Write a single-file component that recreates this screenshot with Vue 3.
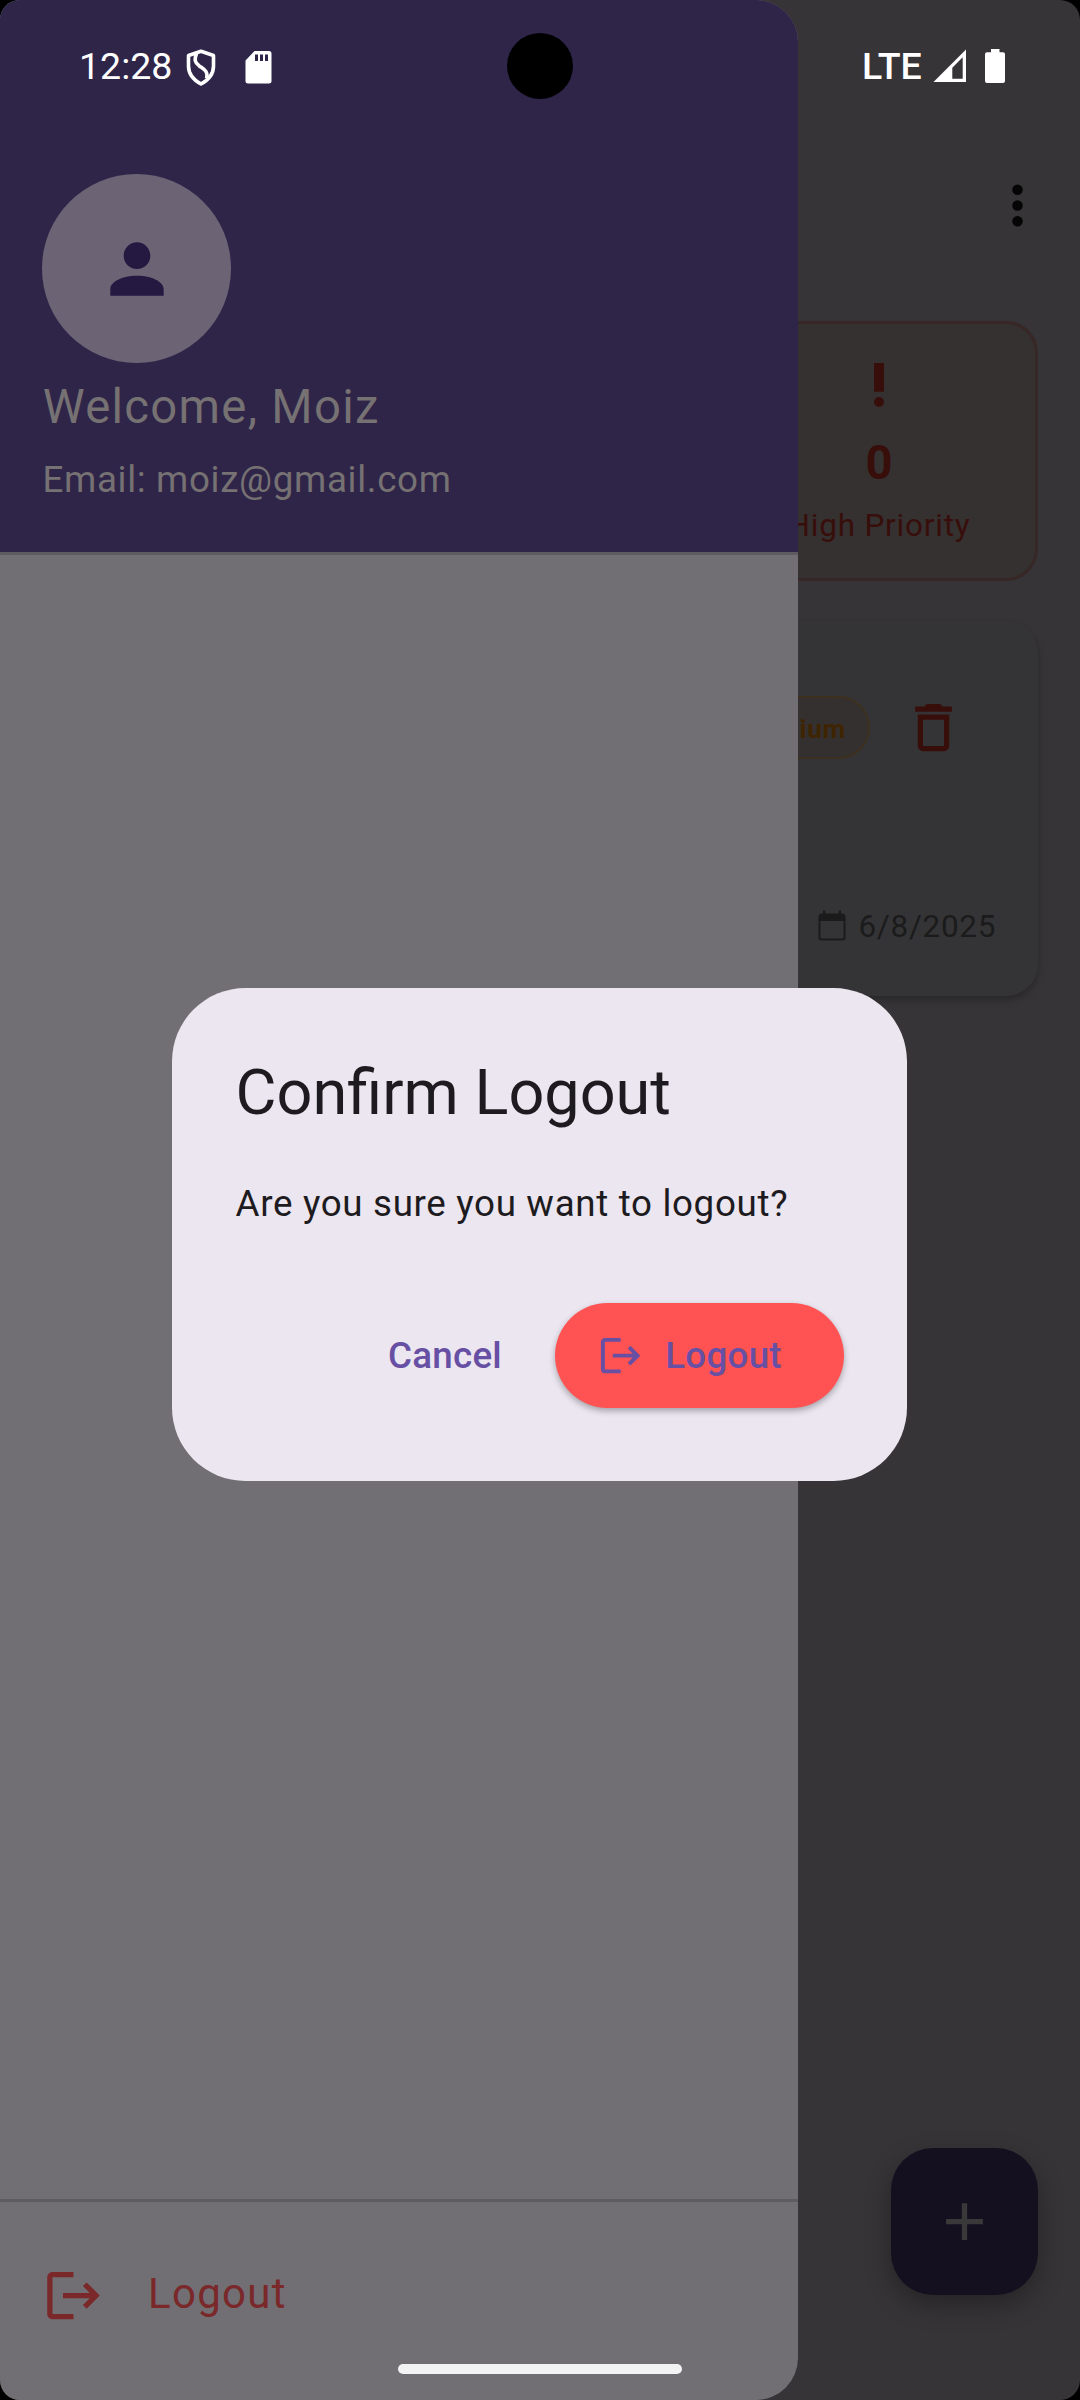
<script setup>
const logoutPath =
  'M17 7l-1.41 1.41L18.17 11H8v2h10.17l-2.58 2.58L17 17l5-5zM4 5h8V3H4c-1.1 0-2 .9-2 2v14c0 1.1.9 2 2 2h8v-2H4z'
const user = { name: 'Moiz', email: 'moiz@gmail.com' }
</script>

<template>
  <div class="device">
    <div class="screen">
      <main class="home layer">
        <header class="appbar">
          <svg class="kebab" width="63" height="63" viewBox="0 0 24 24">
            <circle cx="12" cy="6" r="2" /><circle cx="12" cy="12" r="2" /><circle cx="12" cy="18" r="2" />
          </svg>
        </header>
        <section class="stat">
          <svg class="bang" width="12" height="46" viewBox="0 0 12 46">
            <path d="M1 1h10v28.7H1z" /><circle cx="6" cy="40" r="5" />
          </svg>
          <strong class="count">0</strong>
          <span class="stat-label">High Priority</span>
        </section>
        <section class="task">
          <div class="task-top">
            <span class="badge">Medium</span>
            <svg class="trash" width="63" height="63" viewBox="0 0 24 24">
              <path d="M6 19a2 2 0 0 0 2 2h8a2 2 0 0 0 2-2V7H6zM8 9h8v10H8zM15.5 4l-.6-.7q-.3-.3-.8-.3H9.900q-.5 0-.8.3L8.500 4H5v2h14V4z" />
            </svg>
          </div>
          <div class="task-date">
            <svg width="36" height="36" viewBox="0 0 24 24">
              <path d="M19.700 19.700H4.300V8h15.400M16.500 1v2h-9V1H6v2H5c-1.110 0-2 .89-2 2v14a2 2 0 0 0 2 2h14a2 2 0 0 0 2-2V5c0-1.110-.9-2-2-2h-1V1" />
            </svg>
            <span>6/8/2025</span>
          </div>
        </section>
        <button class="fab">
          <svg width="63" height="63" viewBox="0 0 24 24"><path d="M19 13h-6v6h-2v-6H5v-2h6V5h2v6h6z" /></svg>
        </button>
      </main>

      <aside class="drawer layer">
        <header class="profile">
          <div class="avatar">
            <svg width="80" height="80" viewBox="0 0 24 24">
              <path d="M12 12c2.210 0 4-1.790 4-4s-1.790-4-4-4-4 1.790-4 4 1.790 4 4 4m0 2c-4.420 0-8 1.790-8 4v2h16v-2c0-2.210-3.580-4-8-4" />
            </svg>
          </div>
          <div class="welcome">Welcome, {{ user.name }}</div>
          <div class="email">Email: {{ user.email }}</div>
        </header>
        <footer class="drawer-logout">
          <svg width="63" height="63" viewBox="0 0 24 24"><path :d="logoutPath" /></svg>
          <span>Logout</span>
        </footer>
      </aside>

      <section class="dialog layer">
        <h1>Confirm Logout</h1>
        <p>Are you sure you want to logout?</p>
        <div class="actions">
          <button class="cancel">Cancel</button>
          <button class="confirm">
            <svg width="47.25" height="47.25" viewBox="0 0 24 24"><path :d="logoutPath" /></svg>
            <span>Logout</span>
          </button>
        </div>
      </section>

      <div class="status layer">
        <span class="clock">12:28</span>
        <svg class="shield" width="32" height="37" viewBox="0 0 32 37" fill="none" stroke="#fff" stroke-width="3.600" stroke-linejoin="round">
          <path d="M16 2.300 28.500 6.500v10.500c0 8-5 14-12.500 18C8.500 31 3.500 25 3.500 17V6.500z" />
          <path d="M11.500 4.500c-2.500 6.500-1.500 9 2.500 12.200 5 3.800 9.500 5.300 7.500 12.800" />
        </svg>
        <svg class="sd" width="27" height="33" viewBox="0 0 27 33" fill="#fff">
          <path fill-rule="evenodd" d="M9.500 0H24q2.500 0 2.500 2.500v28q0 2-2.500 2H3q-2.500 0-2.500-2v-21zM10 3.500v6.500h3V3.500zm5 0v6.500h3V3.500zm5 0v6.500h3V3.500z" />
        </svg>
        <span class="camera"></span>
        <span class="lte">LTE</span>
        <svg class="signal" width="34" height="34" viewBox="0 0 34 34" fill="#fff">
          <path fill-rule="evenodd" d="M33 .5V33H.5zM29.700 8.300 19.300 18.700v11h10.400z" />
        </svg>
        <svg class="battery" width="20" height="34" viewBox="0 0 20 34" fill="#fff">
          <path d="M6 0h8.500v3.300H18q2 0 2 2V32q0 2-2 2H2q-2 0-2-2V5.300q0-2 2-2h4z" />
        </svg>
      </div>

      <div class="home-bar layer"></div>
    </div>
  </div>
</template>

<style>
body {
  background: #000;
}
</style>

<style scoped>
* {
  box-sizing: border-box;
}
.device {
  width: 1080px;
  height: 2400px;
  background: #000;
  font-family: Roboto, "Liberation Sans", sans-serif;
}
.screen {
  display: grid;
  width: 1080px;
  height: 2400px;
  border-radius: 20px;
  overflow: hidden;
  background: #363436;
}
.layer {
  grid-area: 1 / 1;
}
svg {
  display: block;
  flex: none;
}
button {
  border: 0;
  padding: 0;
  font-family: inherit;
}

/* Dimmed task list behind the drawer */
.home {
  display: flex;
  flex-direction: column;
  align-items: flex-end;
  height: 2400px;
  padding: 174px 42px 105px;
}
.appbar {
  height: 147px;
  margin-right: -10.5px;
}
.kebab {
  fill: #050505;
}
.stat {
  display: flex;
  flex-direction: column;
  align-items: center;
  width: 318px;
  height: 260px;
  padding-top: 37.5px;
  border: 3px solid #372726;
  border-radius: 32px;
  background: #353131;
  color: #380e0b;
}
.bang {
  fill: #380e0b;
}
.count {
  margin-top: 27px;
  font-size: 47.25px;
  line-height: 56px;
  font-weight: 700;
}
.stat-label {
  margin-top: 15px;
  font-size: 31.5px;
  line-height: 40px;
  letter-spacing: 0.8px;
  white-space: nowrap;
}
.task {
  display: flex;
  flex-direction: column;
  justify-content: space-between;
  align-items: flex-end;
  width: 996px;
  height: 375px;
  margin-top: 40px;
  padding: 75px 42px 49px 42px;
  border-radius: 32px;
  background: #343436;
  box-shadow: 0 4px 7px rgba(0, 0, 0, 0.25);
}
.task-top {
  display: flex;
  gap: 32px;
  margin-right: 31px;
}
.badge {
  height: 63px;
  padding: 0 22px;
  border: 2px solid #3d301f;
  border-radius: 32px;
  background: #353030;
  color: #3f2400;
  font-size: 26.25px;
  font-weight: 700;
  line-height: 62px;
  letter-spacing: 0.7px;
}
.trash {
  fill: #380e0b;
}
.task-date {
  display: flex;
  align-items: center;
  gap: 9px;
  font-size: 31.5px;
  line-height: 40px;
  letter-spacing: 0.66px;
  color: #1b1b1b;
}
.task-date svg {
  fill: #1b1b1b;
}
.fab {
  display: flex;
  align-items: center;
  justify-content: center;
  width: 147px;
  height: 147px;
  margin-top: auto;
  border-radius: 42px;
  background: #15101f;
  box-shadow: 0 10px 26px rgba(0, 0, 0, 0.3);
}
.fab svg {
  fill: #3a3939;
}

/* Navigation drawer */
.drawer {
  display: flex;
  flex-direction: column;
  justify-content: space-between;
  width: 798px;
  height: 2400px;
  border-radius: 0 42px 42px 0;
  overflow: hidden;
  background: #716f74;
}
.profile {
  height: 555px;
  padding: 174px 42px 0;
  border-bottom: 3px solid #5e5c61;
  background: #2f2549;
  color: #767172;
}
.avatar {
  display: flex;
  align-items: center;
  justify-content: center;
  width: 189px;
  height: 189px;
  border-radius: 50%;
  background: #6c6475;
}
.avatar svg {
  fill: #251942;
}
.welcome {
  margin: 8px 0 0 0.7px;
  font-size: 47.25px;
  line-height: 72px;
  letter-spacing: 1.3px;
}
.email {
  margin: 13px 0 0 0.5px;
  font-size: 36.75px;
  line-height: 48px;
  letter-spacing: 0.66px;
}
.drawer-logout {
  display: flex;
  gap: 43px;
  height: 201px;
  padding: 62px 42px 0;
  border-top: 3px solid #5e5c61;
  color: #7a2829;
  font-size: 42px;
  line-height: 60px;
  letter-spacing: 1.3px;
}
.drawer-logout svg {
  fill: #7a2829;
}

/* Confirmation dialog */
.dialog {
  width: 735px;
  height: 492.5px;
  margin: 988px 0 0 172px;
  padding: 63px 63px 63px 63.6px;
  border-radius: 73.5px;
  background: #ebe6f0;
  color: #1d1b20;
}
.dialog h1 {
  margin: 0;
  font-size: 63px;
  font-weight: 400;
  line-height: 84px;
}
.dialog p {
  margin: 43px 0 0;
  font-size: 36.75px;
  line-height: 52.5px;
  letter-spacing: 0.66px;
}
.actions {
  display: flex;
  justify-content: flex-end;
  gap: 53px;
  margin-top: 72.5px;
}
.actions button {
  height: 105px;
  color: #6750a4;
  font-size: 36.75px;
  font-weight: 500;
  letter-spacing: 0.26px;
}
.actions .cancel {
  background: none;
}
.actions .confirm {
  display: flex;
  align-items: center;
  gap: 21px;
  width: 289px;
  padding-left: 42px;
  border-radius: 52.5px;
  background: #ff5252;
  box-shadow: 0 3px 6px rgba(0, 0, 0, 0.3);
}
.confirm svg {
  fill: #6750a4;
}

/* System chrome */
.status {
  display: flex;
  align-items: center;
  height: 66px;
  margin-top: 33px;
  color: #fff;
  font-size: 37.5px;
  line-height: 66px;
}
.clock {
  width: 106px;
  margin-left: 79px;
}
.shield {
  margin-top: 2px;
}
.sd {
  margin: 3px 0 0 28px;
}
.camera {
  width: 66px;
  height: 66px;
  margin-left: 235px;
  border-radius: 50%;
  background: #000;
}
.lte {
  width: 71px;
  margin-left: 289px;
  font-weight: 500;
  line-height: 64px;
}
.signal {
  margin: 0 18px 0 0;
}
.home-bar {
  align-self: end;
  justify-self: center;
  width: 284px;
  height: 10px;
  margin-bottom: 26px;
  border-radius: 5px;
  background: #f3f3f3;
}
</style>
